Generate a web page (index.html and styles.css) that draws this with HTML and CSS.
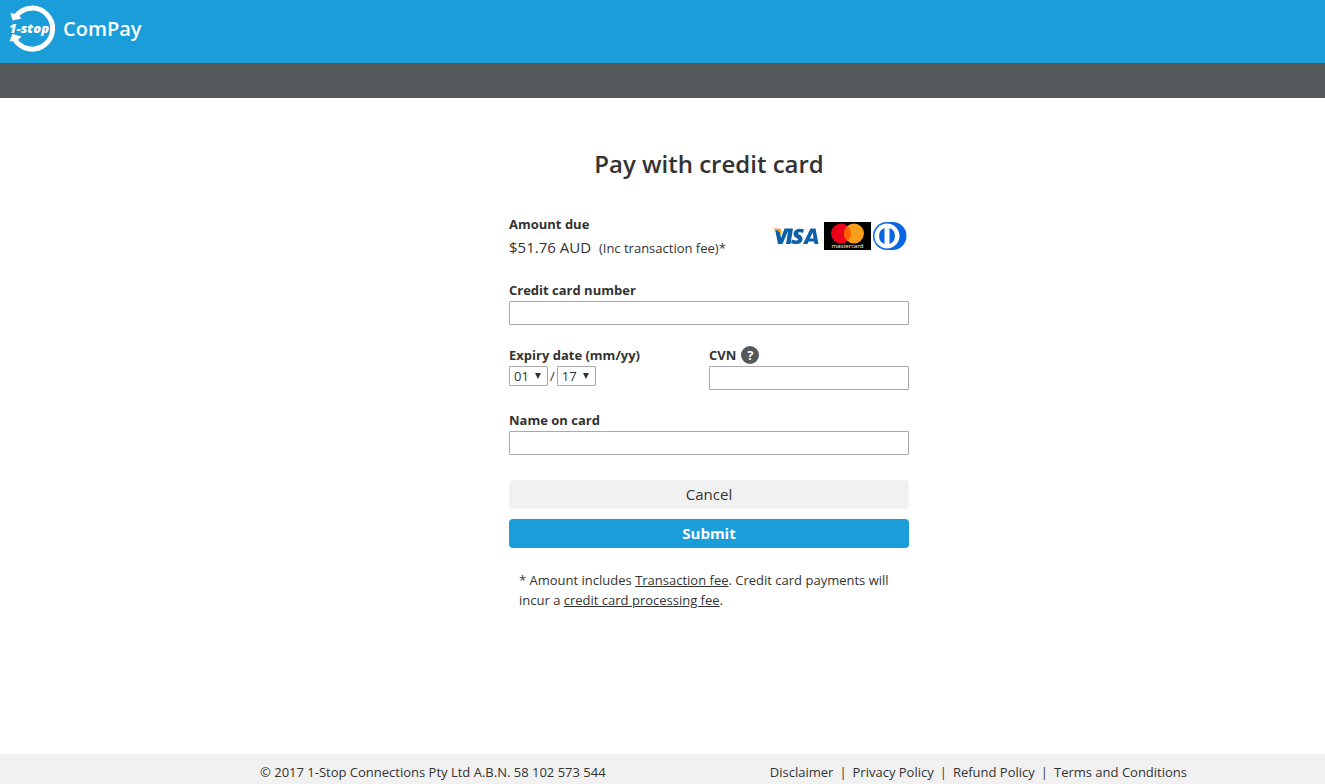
FILE: index.html
```html
<!DOCTYPE html>
<html lang="en">
<head>
<meta charset="utf-8">
<meta name="viewport" content="width=device-width, initial-scale=1">
<title>ComPay</title>
<link rel="stylesheet" href="styles.css">
</head>
<body>
<header class="header">
  <svg class="logo" viewBox="0 0 48 48" role="img" aria-label="1-Stop">
    <path class="logo-ring" d="M8 11A20.500 20.500 0 1 1 6.500 34"/>
    <path class="logo-tip" d="M2.500 8L4.500 15.500l9-2-3.500-4zM1.500 36.500l3-7.500 9 2.500-4 4z"/>
    <text class="logo-text" x="1" y="28">1-stop</text>
  </svg>
  <span class="brand">ComPay</span>
</header>
<div class="strip"></div>
<main class="main">
  <form class="form">
    <h1 class="title">Pay with credit card</h1>
    <div class="summary">
      <div>
        <div class="label">Amount due</div>
        <div class="amount">$51.76 AUD <span class="amount-note">(Inc transaction fee)*</span></div>
      </div>
      <div class="cards">
        <svg class="visa" viewBox="2 0 50 28" role="img" aria-label="Visa">
          <path fill="#0b60a8" d="M18.500 6.500h4.500L20.500 22H16zM5 7h4.500l1.500 9 3.500-9.500H19L12.500 22H8zM34 7.500l-1 3.500c-2-1-5-1.200-5 .3 0 1.500 5 2 4.500 6-.5 5.500-7.500 5.500-11.500 3.700l1-3.500c2.500 1.300 6 1.600 6 0 0-1.700-4.800-2-4.500-5.800.4-5.200 6.500-6 10.500-4.200zM40.500 6.500h5L48.500 22h-4l-.5-2.500h-5.500L37.500 22H33zM42.800 10.500L39.800 16.500h3.700z"/>
          <path fill="#f9a51a" d="M2 6.500h7c1.500 0 2 .6 2.300 2L12 13C10 9.500 6 7.500 2 6.500z"/>
        </svg>
        <svg class="mastercard" viewBox="0 0 47 28" role="img" aria-label="Mastercard">
          <path d="M0 0h47v28H0z"/>
          <circle cx="17" cy="11.500" r="10" fill="#eb001b"/>
          <circle cx="30" cy="11.500" r="10" fill="#f79e1b"/>
          <path fill="#ff5f00" d="M23.500 4a10 10 0 0 1 0 15a10 10 0 0 1 0-15z"/>
          <text class="mc-text" x="23.500" y="26" text-anchor="middle">mastercard</text>
        </svg>
        <svg class="diners" viewBox="0 0 34 28" role="img" aria-label="Diners Club">
          <path fill="#0a66e0" d="M14 0h5.500a14 14 0 0 1 0 28H14A14 14 0 0 1 14 0z"/>
          <circle cx="14" cy="14" r="12.500" fill="#fff"/>
          <path fill="#0a66e0" d="M11.500 6v16a8.600 8.600 0 0 1 0-16zM16.500 6v16a8.600 8.600 0 0 0 0-16z"/>
        </svg>
      </div>
    </div>
    <div class="field">
      <label class="label" for="number">Credit card number</label>
      <input class="input" id="number" type="text">
    </div>
    <div class="field pair">
      <div>
        <label class="label" for="month">Expiry date (mm/yy)</label>
        <div class="expiry">
          <span class="picker"><select class="select" id="month"><option>01</option></select></span>
          <span>/</span>
          <span class="picker"><select class="select" id="year" aria-label="Expiry year"><option>17</option></select></span>
        </div>
      </div>
      <div>
        <div class="cvn"><label class="label" for="cvn">CVN</label><button class="help" type="button">?</button></div>
        <input class="input" id="cvn" type="text">
      </div>
    </div>
    <div class="field">
      <label class="label" for="name">Name on card</label>
      <input class="input" id="name" type="text">
    </div>
    <div class="actions">
      <button class="button" type="button">Cancel</button>
      <button class="button primary" type="submit">Submit</button>
    </div>
    <p class="note">* Amount includes <a href="#">Transaction fee</a>. Credit card payments will incur a <a href="#">credit card processing fee</a>.</p>
  </form>
</main>
<footer class="footer">
  <div class="footer-inner">
    <span>© 2017 1-Stop Connections Pty Ltd A.B.N. 58 102 573 544</span>
    <nav class="links"><a href="#">Disclaimer</a><span class="bar">|</span><a href="#">Privacy Policy</a><span class="bar">|</span><a href="#">Refund Policy</a><span class="bar">|</span><a href="#">Terms and Conditions</a></nav>
  </div>
</footer>
</body>
</html>
```

FILE: styles.css
```css
* { box-sizing: border-box; }
body {
  margin: 0;
  min-height: 100vh;
  display: flex;
  flex-direction: column;
  font-family: "Trebuchet MS", "Open Sans", sans-serif;
  font-size: 13px;
  line-height: 20px;
  color: #333;
  background: #fff;
}
.header {
  display: flex;
  align-items: flex-start;
  gap: 7px;
  padding: 5px 8px 10px;
  background: #1b9dd9;
  color: #fff;
}
.logo { width: 48px; height: 48px; overflow: visible; }
.logo-ring { fill: none; stroke: #fff; stroke-width: 5; }
.logo-tip { fill: #fff; }
.logo-text { fill: #fff; font: italic 800 13px "Open Sans", sans-serif; }
.brand { font-size: 20px; font-weight: 600; line-height: 48px; }
.strip { height: 35px; background: #54585a; }
.main { flex: 1; padding: 49px 0 40px 93px; }
.form { width: 400px; max-width: 100%; margin: 0 auto; }
.title { margin: 0 0 33px; font-size: 24px; line-height: 34px; font-weight: 600; text-align: center; }
.summary { display: flex; justify-content: space-between; margin-bottom: 20px; }
.label { display: block; font-size: 13px; font-weight: 700; }
.amount { font-size: 15px; line-height: 24px; margin-top: 1px; }
.amount-note { font-size: 13px; margin-left: 4px; }
.cards { display: flex; gap: 2px; padding: 8px 2px 0 0; }
.visa { width: 50px; height: 28px; }
.mastercard { width: 47px; height: 28px; }
.diners { width: 34px; height: 28px; }
.mc-text { fill: #fff; font: 400 6px "Open Sans", sans-serif; }
.field { margin-bottom: 20px; }
.pair { display: grid; grid-template-columns: 1fr 1fr; }
.input {
  display: block;
  width: 100%;
  height: 24px;
  margin-top: 1px;
  padding: 2px 4px;
  border: 1px solid #a9a9a9;
  border-radius: 1px;
  background: #fff;
  font: inherit;
}
.expiry { display: flex; gap: 2px; margin-top: 1px; }
.picker { position: relative; display: block; }
.picker::after {
  content: "";
  position: absolute;
  right: 7px;
  top: 7px;
  border: 3px solid transparent;
  border-top: 6px solid #333;
  border-bottom: 0;
  pointer-events: none;
}
.select {
  display: block;
  appearance: none;
  width: 39px;
  height: 20px;
  padding: 0 4px;
  border: 1px solid #a9a9a9;
  border-radius: 1px;
  background: #fff;
  color: #333;
  font: inherit;
  line-height: 18px;
}
.cvn { display: flex; align-items: center; gap: 5px; height: 20px; }
.help {
  width: 18px;
  height: 18px;
  padding: 0;
  border: 0;
  border-radius: 50%;
  background: #54585a;
  color: #fff;
  font: inherit;
  font-weight: 700;
  line-height: 18px;
}
.actions { display: grid; gap: 10px; margin-top: 25px; }
.button {
  height: 29px;
  padding: 0 0 2px;
  border: 0;
  border-radius: 4px;
  background: #f1f1f1;
  color: #333;
  font: inherit;
  font-size: 15px;
}
.primary { background: #1b9dd9; color: #fff; font-weight: 700; }
.note { margin: 22px 0 0; padding: 0 10px; font-size: 13px; }
a { color: inherit; }
.footer { padding: 8px 16px 2px; background: #f1f1f1; }
.footer-inner {
  display: flex;
  justify-content: space-between;
  width: 1049px;
  max-width: 100%;
  margin: 0 auto;
  padding-left: 122px;
}
.links { display: flex; }
.links a { text-decoration: none; }
.bar { padding: 0 6px; }
```
